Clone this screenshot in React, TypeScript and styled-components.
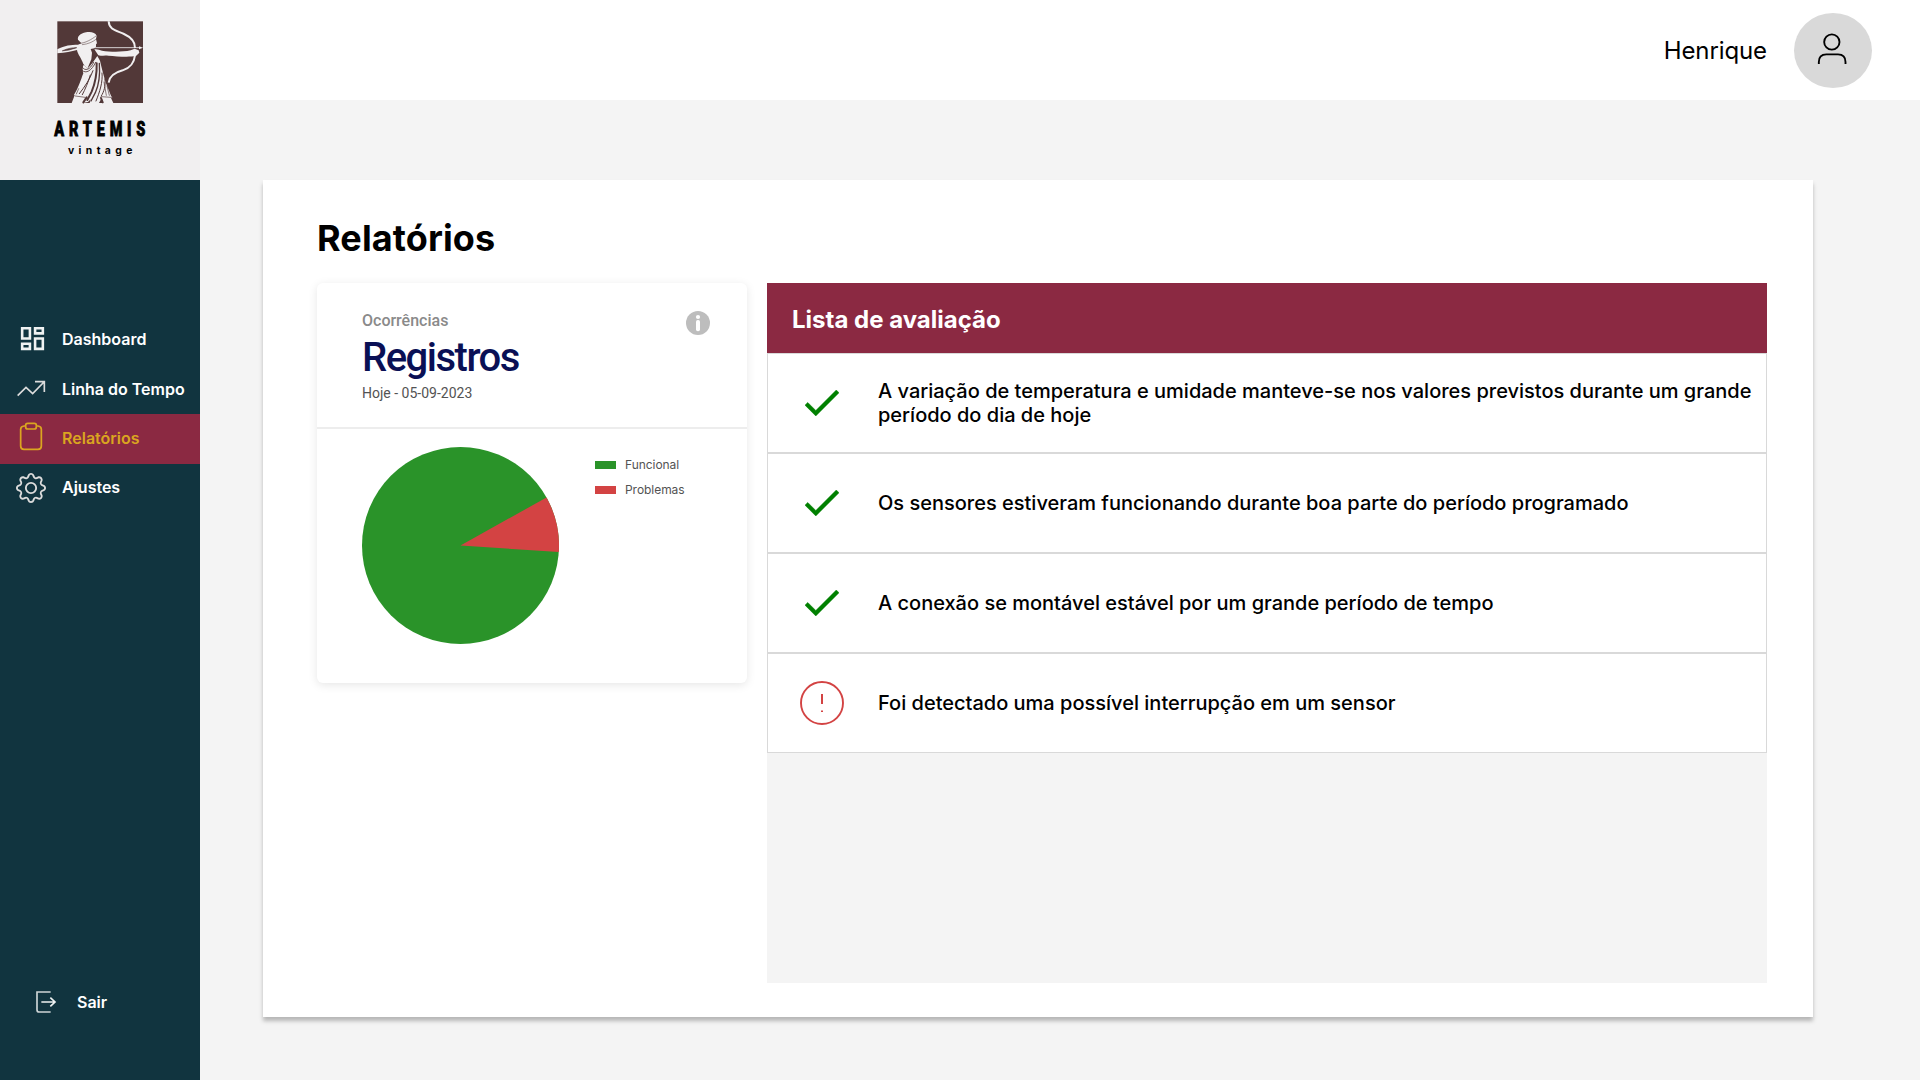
import React from "react";
import styled, { createGlobalStyle } from "styled-components";
import { BsGear } from "react-icons/bs";
import { MdOutlineDashboard } from "react-icons/md";

const GlobalStyle = createGlobalStyle`
  * { box-sizing: border-box; }
  body { margin: 0; background: #f4f4f4; font-family: Inter, "Liberation Sans", sans-serif; color: #000; }
  h1, h2, p, ul { margin: 0; padding: 0; }
  svg { display: block; flex: none; }
`;

const Page = styled.div`
  display: flex;
  width: 1920px;
  height: 1080px;
  overflow: hidden;
`;

const Sidebar = styled.aside`
  display: flex;
  flex-direction: column;
  width: 200px;
  flex: none;
  background: #11343f;
`;

const Brand = styled.div`
  height: 180px;
  background: #f1eff0;
`;

const Nav = styled.nav`
  display: flex;
  flex-direction: column;
  margin-top: 134px;
`;

const NavItem = styled.a<{ $active?: boolean; $lift?: number }>`
  display: flex;
  align-items: center;
  height: 50px;
  padding-bottom: ${(p) => (p.$lift ?? 0) * 2}px;
  background: ${(p) => (p.$active ? "#8b2942" : "transparent")};
  color: ${(p) => (p.$active ? "#daa520" : "#fff")};
  font-size: 16px;
  line-height: 20px;
  font-weight: 600;
  white-space: nowrap;
`;

const NavIcon = styled.span<{ $bottom?: number; $left?: number; $top?: number }>`
  display: flex;
  justify-content: center;
  width: 62px;
  padding: ${(p) => p.$top ?? 0}px 0 ${(p) => p.$bottom ?? 0}px ${(p) => p.$left ?? 0}px;
`;

const Logout = styled.a`
  display: flex;
  align-items: center;
  gap: 20px;
  margin: auto 0 66px 36px;
  height: 24px;
  color: #fff;
  font-size: 16px;
  font-weight: 600;
`;

const Main = styled.div`
  display: flex;
  flex-direction: column;
  flex: 1;
`;

const Header = styled.header`
  display: flex;
  align-items: center;
  justify-content: flex-end;
  gap: 27px;
  height: 100px;
  padding: 1px 48px 0 0;
  background: #fff;
`;

const UserName = styled.span`
  font-size: 24px;
  line-height: 30px;
  letter-spacing: -0.1px;
`;

const Avatar = styled.div`
  display: flex;
  align-items: center;
  justify-content: center;
  width: 78px;
  height: 75px;
  padding: 0 2px 4px 0;
  border-radius: 50%;
  background: #d9d9d9;
`;

const Panel = styled.section`
  width: 1550px;
  height: 837px;
  margin: 80px 0 0 63px;
  padding: 36px 46px 34px 54px;
  background: #fff;
  box-shadow: 0 4px 4px rgba(0, 0, 0, 0.25);
`;

const Title = styled.h1`
  height: 67px;
  font-size: 36px;
  line-height: 44px;
  font-weight: 700;
  letter-spacing: 0.12px;
`;

const Columns = styled.div`
  display: flex;
  gap: 20px;
`;

const Card = styled.article`
  width: 430px;
  height: 400px;
  border-radius: 6px;
  background: #fff;
  box-shadow: 0 2px 10px rgba(0, 0, 0, 0.1);
`;

const CardHead = styled.div`
  display: flex;
  justify-content: space-between;
  height: 146px;
  padding: 28px 37px 0 45px;
  border-bottom: 2px solid #ededed;
  font-family: Roboto, sans-serif;
`;

const Kicker = styled.p`
  font-size: 16px;
  line-height: 20px;
  font-weight: 500;
  color: #8a8a8a;
`;

const CardTitle = styled.h2`
  padding-top: 3px;
  font-size: 40px;
  line-height: 48px;
  font-weight: 500;
  letter-spacing: -1.5px;
  color: #0a1055;
`;

const DateLine = styled.p`
  margin-top: 2px;
  font-size: 14px;
  line-height: 18px;
  color: #535353;
`;

const Chart = styled.div`
  display: flex;
  padding: 18px 0 0 45px;
`;

const Legend = styled.ul`
  display: flex;
  flex-direction: column;
  gap: 9px;
  margin: 9px 0 0 36px;
  list-style: none;
`;

const LegendItem = styled.li<{ $color: string }>`
  display: flex;
  align-items: center;
  gap: 9px;
  height: 16px;
  font-size: 12px;
  letter-spacing: -0.05px;
  color: #535353;
  &::before {
    content: "";
    width: 21px;
    height: 8px;
    margin-top: 2px;
    background: ${(p) => p.$color};
  }
`;

const List = styled.div`
  width: 1000px;
  height: 700px;
  background: #f4f4f4;
`;

const ListHead = styled.h2`
  height: 70px;
  padding: 2px 0 0 25px;
  background: #8b2942;
  color: #fff;
  font-size: 24px;
  line-height: 70px;
  font-weight: 700;
`;

const Row = styled.div`
  display: flex;
  align-items: center;
  height: 100px;
  border: 1px solid #d9d9d9;
  background: #fff;
`;

const RowIcon = styled.span`
  display: flex;
  justify-content: center;
  width: 110px;
  padding: 0 2px 1px 0;
  flex: none;
`;

const RowText = styled.p`
  flex: 1;
  font-size: 20px;
  line-height: 24px;
  font-weight: 500;
`;

const Logo = () => (
  <svg width="200" height="180" viewBox="0 0 600 540">
    <rect x="172" y="64" width="257" height="245" fill="#523838" />
    <g fill="none" stroke="#f1eff0" strokeWidth="6">
      <path d="M326 64C327 90 350 92 372 102C394 112 406 124 405 144" />
      <path d="M405 166C402 190 392 203 368 211C342 218 328 230 326 248" />
      <path d="M272 143H420" strokeWidth="2.5" />
    </g>
    <g fill="#f1eff0">
      <path d="M417 139L429 143L417 148Z" />
      <path d="M283 148C292 146 298 150 306 152C330 156 365 157 392 151L404 146L416 151L418 158L408 168C385 172 350 169 325 167C312 165 302 169 295 166Z" />
      <path d="M234 119C232 110 240 100 258 97C273 94 286 98 290 107L288 117L291 130L288 133L288 140L282 145L272 147L276 158L274 178L262 206L250 192C245 176 233 163 231 150C215 154 195 159 172 160V148C194 136 213 134 234 134L244 130Z" />
      <path d="M292 168L300 182C305 205 312 230 318 250L333 287L337 293L332 292L340 309H310L305 294L297 309H269L272 298L264 306L247 309H215L224 286L222 284C236 263 243 238 250 220C247 208 248 196 252 194L262 206C275 193 284 180 292 168Z" />
    </g>
    <g fill="none" stroke="#523838" strokeLinecap="round">
      <path d="M188 152C203 145 218 143 230 143L207 150Z" fill="#523838" strokeWidth="2" />
      <path d="M240 130C256 129 274 119 288 108M247 134C265 132 278 126 288 118" strokeWidth="1.6" />
      <path d="M247 202C255 214 270 211 281 187M246 211C258 223 275 212 287 187" strokeWidth="2.5" />
      <path d="M279 212C269 239 255 259 238 281M271 225C265 246 255 269 247 284" strokeWidth="3" />
      <path d="M290 190C291 222 286 249 275 275L262 300" strokeWidth="6" />
      <path d="M298 190C301 230 296 256 286 278L273 303" strokeWidth="4" />
      <path d="M306 219C309 246 299 276 288 303M315 237C317 260 312 274 304 288" strokeWidth="3" />
      <path d="M312 246L319 286M321 258L328 286M226 288L255 292M304 290L333 292M236 266L229 282" strokeWidth="2" />
      <path d="M260 292L250 307M303 294L308 307" strokeWidth="6" />
    </g>
    <g transform="translate(163 408) scale(.7 1)">
      <text textLength="390" fontFamily="Roboto, sans-serif" fontWeight="900" fontSize="62" stroke="#000" strokeWidth="2.5">ARTEMIS</text>
    </g>
    <text x="204" y="462" textLength="193" fontFamily="Inter, sans-serif" fontWeight="700" fontSize="31">vintage</text>
  </svg>
);

const TrendIcon = () => (
  <svg width="29" height="18" viewBox="51 212 87 54" fill="none" stroke="#dcdcdc" strokeWidth="5">
    <path d="M53 259L78 234L98 253L132 218M105 217H133V248" />
  </svg>
);

const ClipboardIcon = () => (
  <svg width="24" height="29" viewBox="57 335 72 87" fill="none" stroke="#daa520" strokeWidth="5.2">
    <path d="M77 347H72Q62 348 62 357V407Q62 417 72 417H114Q124 417 124 407V357Q124 348 114 347H109" />
    <rect x="77" y="339" width="32" height="17" rx="6" />
  </svg>
);

const LogoutIcon = () => (
  <svg width="21" height="24" viewBox="108 90 63 72" fill="none" stroke="#eef1f1" strokeWidth="5">
    <path d="M152 96H111V149Q111 156 118 156H152" strokeOpacity=".85" />
    <path d="M124 126H165M151 113L165 126L151 139" />
  </svg>
);

const UserIcon = () => (
  <svg width="30" height="32" viewBox="533 99 90 96" fill="none" stroke="#000" strokeWidth="5.6">
    <circle cx="577.5" cy="126" r="23" />
    <path d="M538.5 192V186Q538.5 163 561 163H596Q618.5 163 618.5 186V192" />
  </svg>
);

const InfoIcon = () => (
  <svg width="24" height="24" viewBox="0 0 24 24">
    <circle cx="12" cy="12" r="12" fill="#bdbdbd" />
    <circle cx="12" cy="6" r="2.1" fill="#fff" />
    <rect x="10" y="9" width="4" height="11.3" rx="1.8" fill="#fff" />
  </svg>
);

const CheckIcon = () => (
  <svg width="34" height="26" viewBox="3.41 5.59 17.59 13.41">
    <path fill="#008000" stroke="#008000" strokeWidth=".25" d="M9 16.17L4.83 12l-1.42 1.41L9 19 21 7l-1.41-1.41z" />
  </svg>
);

const AlertIcon = () => (
  <svg width="44" height="44" viewBox="0 0 44 44" fill="none" stroke="#d34343">
    <circle cx="22" cy="22" r="21" strokeWidth="1.9" />
    <path d="M22 13V23M22 29.5V31" strokeWidth="2" />
  </svg>
);

const Pie = () => (
  <svg width="197" height="197" viewBox="0 0 197 197">
    <circle cx="98.5" cy="98.5" r="98.5" fill="#2a9329" />
    <path d="M98.5 98.5L184.5 50.5A98.5 98.5 0 0 1 196.8 105Z" fill="#d34343" />
  </svg>
);

const items = [
  { ok: true, text: "A variação de temperatura e umidade manteve-se nos valores previstos durante um grande período do dia de hoje" },
  { ok: true, text: "Os sensores estiveram funcionando durante boa parte do período programado" },
  { ok: true, text: "A conexão se montável estável por um grande período de tempo" },
  { ok: false, text: "Foi detectado uma possível interrupção em um sensor" },
];

export default function App() {
  return (
    <Page>
      <GlobalStyle />
      <Sidebar>
        <Brand><Logo /></Brand>
        <Nav>
          <NavItem><NavIcon $bottom={2} $left={2}><MdOutlineDashboard size={31} color="#f0f2f2" /></NavIcon>Dashboard</NavItem>
          <NavItem><NavIcon><TrendIcon /></NavIcon>Linha do Tempo</NavItem>
          <NavItem $active $lift={1}><NavIcon $bottom={4}><ClipboardIcon /></NavIcon>Relatórios</NavItem>
          <NavItem $lift={2}><NavIcon $top={2}><BsGear size={30} color="#dcdcdc" /></NavIcon>Ajustes</NavItem>
        </Nav>
        <Logout><LogoutIcon />Sair</Logout>
      </Sidebar>
      <Main>
        <Header>
          <UserName>Henrique</UserName>
          <Avatar><UserIcon /></Avatar>
        </Header>
        <Panel>
          <Title>Relatórios</Title>
          <Columns>
            <Card>
              <CardHead>
                <div>
                  <Kicker>Ocorrências</Kicker>
                  <CardTitle>Registros</CardTitle>
                  <DateLine>Hoje - 05-09-2023</DateLine>
                </div>
                <InfoIcon />
              </CardHead>
              <Chart>
                <Pie />
                <Legend>
                  <LegendItem $color="#2a9329">Funcional</LegendItem>
                  <LegendItem $color="#d34343">Problemas</LegendItem>
                </Legend>
              </Chart>
            </Card>
            <List>
              <ListHead>Lista de avaliação</ListHead>
              {items.map((item) => (
                <Row key={item.text}>
                  <RowIcon>{item.ok ? <CheckIcon /> : <AlertIcon />}</RowIcon>
                  <RowText>{item.text}</RowText>
                </Row>
              ))}
            </List>
          </Columns>
        </Panel>
      </Main>
    </Page>
  );
}
